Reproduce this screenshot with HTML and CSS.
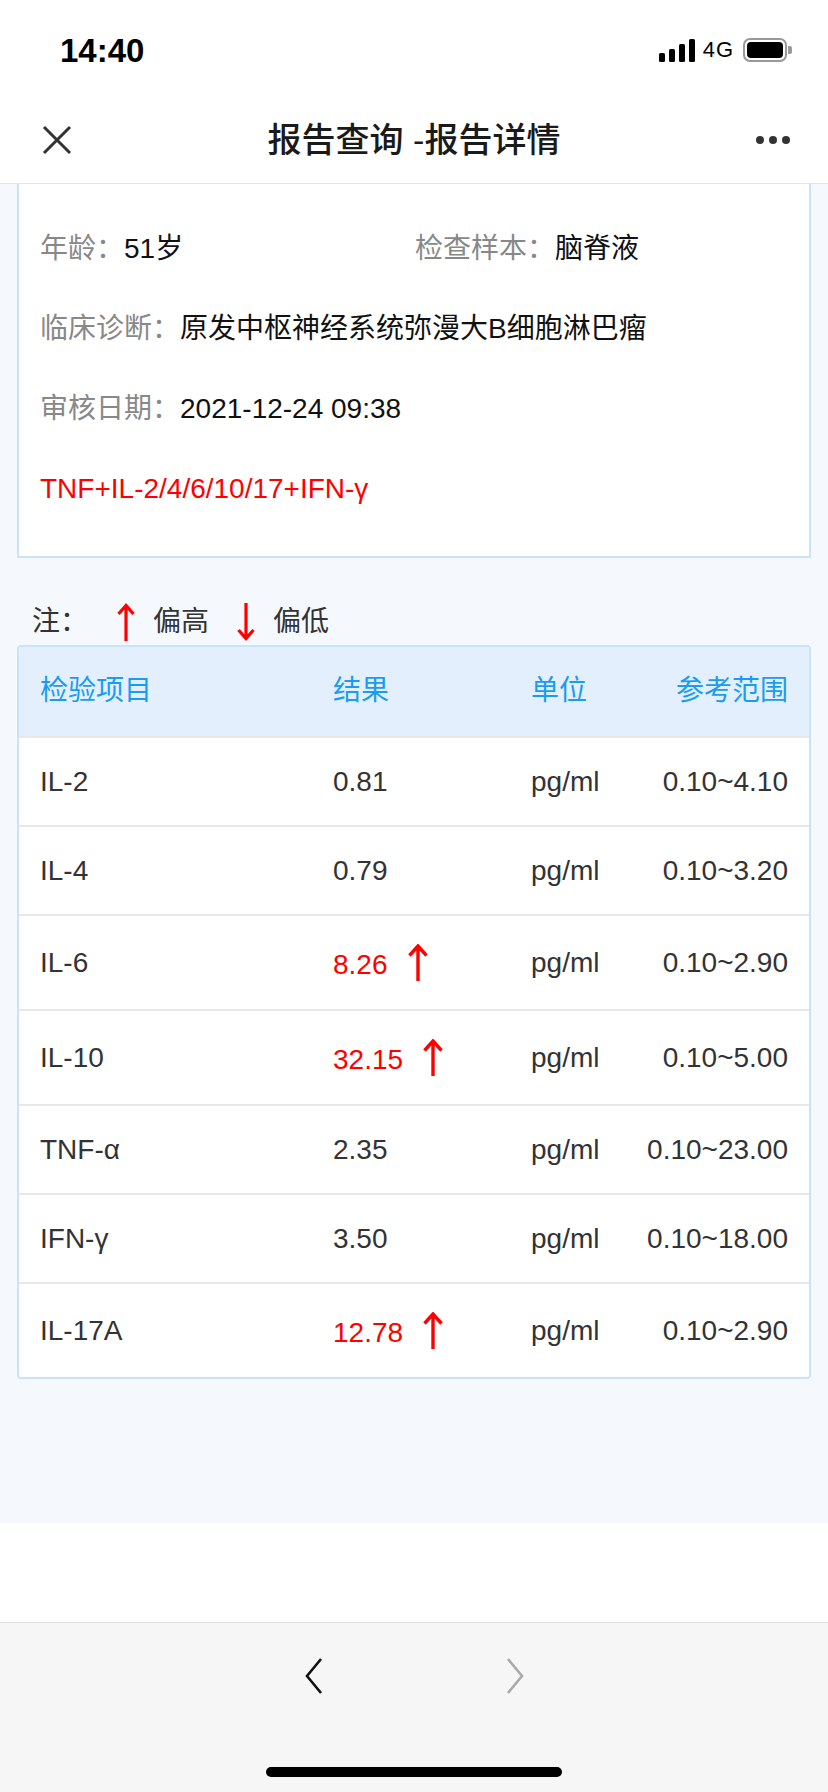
FILE: index.html
```html
<!DOCTYPE html>
<html>
<head>
<meta http-equiv="Content-Type" content="text/html; charset=utf-8"/>
<title>报告详情</title>
<link rel="stylesheet" href="styles.css">
</head>
<body>
<div class="phone">

  <div class="status">
    <span class="time">14:40</span>
    <div class="status-right">
      <div class="signal"><i class="s1"></i><i class="s2"></i><i class="s3"></i><i class="s4"></i></div>
      <span class="net">4G</span>
      <div class="battery">
        <div class="battery-body"><div class="battery-level"></div></div>
        <div class="battery-cap"></div>
      </div>
    </div>
  </div>

  <div class="navbar">
    <svg class="nav-close" width="30" height="30" viewBox="0 0 30 30">
      <path d="M2 2 L28 28 M28 2 L2 28" stroke="#333" stroke-width="3" fill="none"/>
    </svg>
    <div class="nav-title">报告查询 -报告详情</div>
    <svg class="nav-more" width="34" height="10" viewBox="0 0 34 10">
      <circle cx="4" cy="5" r="4" fill="#333"/>
      <circle cx="17" cy="5" r="4" fill="#333"/>
      <circle cx="30" cy="5" r="4" fill="#333"/>
    </svg>
  </div>

  <div class="content">
    <div class="page">

      <div class="info-card">
        <div class="info-row info-split">
          <div><span class="label">年龄：</span><span class="value">51岁</span></div>
          <div><span class="label">检查样本：</span><span class="value">脑脊液</span></div>
        </div>
        <div class="info-row"><span class="label">临床诊断：</span><span class="value">原发中枢神经系统弥漫大B细胞淋巴瘤</span></div>
        <div class="info-row"><span class="label">审核日期：</span><span class="value">2021-12-24 09:38</span></div>
        <div class="info-row info-items">TNF+IL-2/4/6/10/17+IFN-γ</div>
      </div>

      <div class="legend">
        <span class="legend-label">注：</span>
        <svg class="arrow legend-arrow" width="18" height="38" viewBox="0 0 18 38">
          <path d="M9 2 V38 M1.5 11 L9 2.5 L16.5 11" stroke="#f00" stroke-width="3.2" fill="none"/>
        </svg>
        <span class="legend-text">偏高</span>
        <svg class="arrow legend-arrow" width="18" height="38" viewBox="0 0 18 38">
          <path d="M9 0 V36 M1.5 27 L9 35.5 L16.5 27" stroke="#f00" stroke-width="3.2" fill="none"/>
        </svg>
        <span class="legend-text">偏低</span>
      </div>

      <div class="result-table">
        <div class="tr th">
          <div>检验项目</div><div>结果</div><div>单位</div><div class="range">参考范围</div>
        </div>
        <div class="tr">
          <div>IL-2</div><div>0.81</div><div>pg/ml</div><div class="range">0.10~4.10</div>
        </div>
        <div class="tr">
          <div>IL-4</div><div>0.79</div><div>pg/ml</div><div class="range">0.10~3.20</div>
        </div>
        <div class="tr tr-high">
          <div>IL-6</div>
          <div class="val-high"><span>8.26</span>
            <svg class="arrow" width="20" height="37" viewBox="0 0 20 37"><path d="M10 1.5 V37 M1.5 11.5 L10 2 L18.5 11.5" stroke="#f00" stroke-width="3.4" fill="none"/></svg>
          </div>
          <div>pg/ml</div><div class="range">0.10~2.90</div>
        </div>
        <div class="tr tr-high">
          <div>IL-10</div>
          <div class="val-high"><span>32.15</span>
            <svg class="arrow" width="20" height="37" viewBox="0 0 20 37"><path d="M10 1.5 V37 M1.5 11.5 L10 2 L18.5 11.5" stroke="#f00" stroke-width="3.4" fill="none"/></svg>
          </div>
          <div>pg/ml</div><div class="range">0.10~5.00</div>
        </div>
        <div class="tr">
          <div>TNF-α</div><div>2.35</div><div>pg/ml</div><div class="range">0.10~23.00</div>
        </div>
        <div class="tr">
          <div>IFN-γ</div><div>3.50</div><div>pg/ml</div><div class="range">0.10~18.00</div>
        </div>
        <div class="tr tr-high">
          <div>IL-17A</div>
          <div class="val-high"><span>12.78</span>
            <svg class="arrow" width="20" height="37" viewBox="0 0 20 37"><path d="M10 1.5 V37 M1.5 11.5 L10 2 L18.5 11.5" stroke="#f00" stroke-width="3.4" fill="none"/></svg>
          </div>
          <div>pg/ml</div><div class="range">0.10~2.90</div>
        </div>
      </div>

    </div>
  </div>

  <div class="toolbar">
    <div class="toolbar-nav">
      <svg width="20" height="36" viewBox="0 0 20 36">
        <path d="M18 1 L4 18 L18 35" stroke="#111" stroke-width="2.6" fill="none"/>
      </svg>
      <svg width="20" height="36" viewBox="0 0 20 36">
        <path d="M2 1 L16 18 L2 35" stroke="#aaa" stroke-width="2.6" fill="none"/>
      </svg>
    </div>
    <div class="home-bar"></div>
  </div>

</div>
</body>
</html>
```

FILE: styles.css
```css
html, body {
  margin: 0;
  padding: 0;
}

body {
  font-family: "Liberation Sans", "Noto Sans CJK SC", sans-serif;
  font-size: 28px;
  color: #333;
  background-color: white;
}

.phone {
  width: 828px;
  height: 1792px;
  display: flex;
  flex-direction: column;
  overflow: hidden;
}

/* status bar */
.status {
  height: 88px;
  box-sizing: border-box;
  padding: 12px 36px 0 60px;
  display: flex;
  align-items: center;
  justify-content: space-between;
  background: white;
}

.time {
  font-size: 33px;
  line-height: 33px;
  font-weight: bold;
  color: #000;
}

.status-right {
  display: flex;
  align-items: center;
}

.signal {
  display: flex;
  align-items: flex-end;
  gap: 4px;
  height: 23px;
}

.signal i {
  display: block;
  width: 6px;
  background: #000;
  border-radius: 1.5px;
}
.signal .s1 { height: 9px; }
.signal .s2 { height: 13px; }
.signal .s3 { height: 18px; }
.signal .s4 { height: 23px; }

.net {
  margin-left: 8px;
  font-size: 22px;
  line-height: 22px;
  letter-spacing: 1px;
  color: #000;
}

.battery {
  margin-left: 9px;
  display: flex;
  align-items: center;
}

.battery-body {
  width: 44px;
  height: 24px;
  box-sizing: border-box;
  border: 2px solid #999;
  border-radius: 7px;
  padding: 2px;
}

.battery-level {
  height: 100%;
  background: #000;
  border-radius: 4px;
}

.battery-cap {
  width: 4px;
  height: 8px;
  margin-left: 1px;
  background: #999;
  border-radius: 0 2px 2px 0;
}

/* nav bar */
.navbar {
  height: 96px;
  box-sizing: border-box;
  padding: 9px 38px 0 42px;
  display: flex;
  align-items: center;
  border-bottom: 1px solid #e2e2e2;
  background: white;
}

.nav-title {
  flex: 1;
  text-align: center;
  font-size: 34px;
  line-height: 40px;
  font-weight: 500;
  color: #1a1a1a;
}

/* page content */
.content {
  flex: 1;
  background: white;
  overflow: hidden;
}

.page {
  background: #f5f9fe;
  padding: 0 17px 144px;
}

.info-card {
  background: white;
  border: 2px solid #c9e3fa;
  border-top: none;
  padding: 25px 21px 27px;
}

.info-row {
  height: 80px;
  line-height: 80px;
  white-space: nowrap;
}

.info-split {
  display: grid;
  grid-template-columns: 375px 1fr;
}

.label {
  color: #888;
}

.value {
  color: #111;
}

.info-items {
  color: #f00;
}

.legend {
  margin-top: 40px;
  height: 47px;
  padding-left: 15px;
  display: flex;
  align-items: center;
  line-height: 32px;
  color: #333;
}

.legend-label {
  margin-right: 29px;
}

.legend-arrow {
  margin-right: 18px;
}

.legend-text {
  margin-right: 28px;
}

.result-table {
  background: white;
  border: 2px solid #c9e3fa;
  border-radius: 4px;
  overflow: hidden;
}

.tr {
  display: grid;
  grid-template-columns: 293px 198px 1fr auto;
  align-items: center;
  padding: 28px 21px 27px;
  line-height: 32px;
  border-bottom: 2px solid #e8e8e8;
  white-space: nowrap;
}

.tr-high {
  padding-bottom: 28px;
}

.tr:last-child {
  border-bottom: none;
}

.th {
  padding: 28px 21px 29px;
  background: #e3effc;
  color: #1a9cf0;
}

.range {
  text-align: right;
}

.val-high {
  display: flex;
  align-items: flex-end;
  color: #f00;
}

.val-high .arrow {
  margin-left: 20px;
  display: block;
}

/* bottom toolbar */
.toolbar {
  height: 170px;
  box-sizing: border-box;
  background: #f6f6f6;
  border-top: 1px solid #dedede;
  padding-top: 35px;
  display: flex;
  flex-direction: column;
  align-items: center;
}

.toolbar-nav {
  display: flex;
  gap: 183px;
}

.toolbar-nav svg {
  display: block;
}

.home-bar {
  margin-top: 73px;
  width: 296px;
  height: 10px;
  border-radius: 5px;
  background: #000;
}
```
